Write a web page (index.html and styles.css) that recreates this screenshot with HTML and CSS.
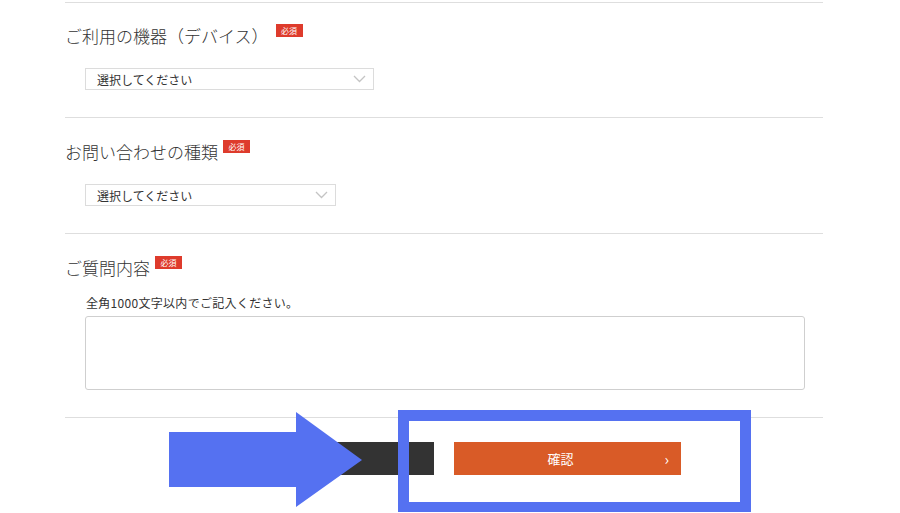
FILE: index.html
```html
<!DOCTYPE html>
<html lang="ja">
<head>
    <meta charset="UTF-8">
    <meta name="viewport" content="width=device-width, initial-scale=1.0">
    <title>お問い合わせ</title>
    <link rel="stylesheet" href="styles.css">
</head>
<body>

<div class="form">
    <div class="field">
        <div class="label">ご利用の機器（デバイス）<span class="req wide">必須</span></div>
        <div class="select device">
            <span>選択してください</span>
            <svg class="chev" width="13" height="8" viewBox="0 0 13 8"><polyline points="1,1 6.5,6.5 12,1" fill="none" stroke="#c4c4c4" stroke-width="1.3"/></svg>
        </div>
    </div>

    <div class="field">
        <div class="label">お問い合わせの種類<span class="req">必須</span></div>
        <div class="select kind">
            <span>選択してください</span>
            <svg class="chev" width="13" height="8" viewBox="0 0 13 8"><polyline points="1,1 6.5,6.5 12,1" fill="none" stroke="#c4c4c4" stroke-width="1.3"/></svg>
        </div>
    </div>

    <div class="field">
        <div class="label">ご質問内容<span class="req">必須</span></div>
        <p class="note">全角1000文字以内でご記入ください。</p>
        <div class="textarea"></div>
    </div>

    <div class="actions">
        <button class="btn back">戻る</button>
        <button class="btn confirm"><span>確認</span><i class="arr">&rsaquo;</i></button>
    </div>
</div>

<!-- annotation overlay -->
<svg class="pointer" width="200" height="100" viewBox="0 0 200 100">
    <polygon points="0,20 127,20 127,0 193,48 127,95 127,75 0,75" fill="#5571f1"/>
</svg>
<div class="highlight"></div>

</body>
</html>
```

FILE: styles.css
```css
body {
    margin: 0;
    font-family: "Noto Sans CJK JP", "Noto Sans", sans-serif;
    color: #333;
    background-color: #ffffff;
    overflow: hidden;
}

.form {
    width: 758px;
    margin: 2px 0 0 65px;
}

.field {
    border-top: 1px solid #dedede;
    padding: 22px 0 27px;
}

.field:first-child {
    padding-top: 21px;
}

.label {
    font-size: 17px;
    line-height: 24px;
    height: 24px;
    font-weight: 300;
}

.req {
    display: inline-block;
    vertical-align: top;
    margin: 0 0 0 5px;
    width: 27px;
    height: 13px;
    background-color: #de3b2c;
    color: #ffffff;
    font-size: 8px;
    font-weight: 400;
    line-height: 13px;
    text-align: center;
}

.req.wide {
    margin-left: 7px;
}

.select {
    display: flex;
    align-items: center;
    justify-content: space-between;
    box-sizing: border-box;
    height: 22px;
    margin: 20px 0 0 20px;
    padding: 0 7px 0 11px;
    border: 1px solid #dcdcdc;
    font-size: 12px;
}

.select.device {
    width: 289px;
}

.select.kind {
    width: 251px;
}

.note {
    margin: 14px 0 0 21px;
    font-size: 12px;
    line-height: 18px;
    letter-spacing: 0.3px;
}

.textarea {
    box-sizing: border-box;
    width: 720px;
    height: 74px;
    margin: 4px 0 0 20px;
    border: 1px solid #cfcfcf;
    border-radius: 3px;
}

.actions {
    border-top: 1px solid #dedede;
    display: flex;
    justify-content: center;
    gap: 20px;
    padding-top: 24px;
}

.btn {
    width: 227px;
    height: 33px;
    border: none;
    color: #ffffff;
    font-family: inherit;
    font-size: 13px;
    cursor: pointer;
}

.btn.back {
    background-color: #333333;
}

.btn.confirm {
    position: relative;
    background-color: #d95b27;
    padding-right: 20px;
}

.arr {
    position: absolute;
    right: 12px;
    top: 6px;
    font-style: normal;
    font-size: 15px;
}

.pointer {
    position: absolute;
    left: 169px;
    top: 412px;
}

.highlight {
    position: absolute;
    left: 398px;
    top: 410px;
    box-sizing: border-box;
    width: 353px;
    height: 102px;
    border: 11px solid #5571f1;
    border-bottom-width: 10px;
}
```
